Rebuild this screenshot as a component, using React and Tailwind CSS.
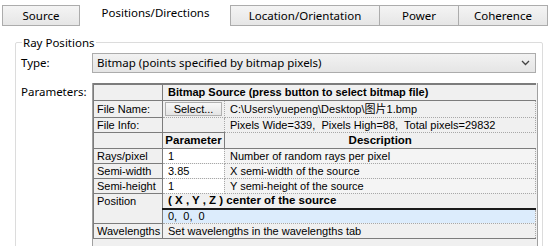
import React from 'react';

const tabs = [
  { label: 'Source', w: 'w-[78px]' },
  { label: 'Positions/Directions', w: 'w-[151px]', active: true },
  { label: 'Location/Orientation', w: 'w-[150px]' },
  { label: 'Power', w: 'w-[80px]' },
  { label: 'Coherence', w: 'w-[90px]' },
];

const rows = [
  { name: 'Rays/pixel', value: '1', desc: 'Number of random rays per pixel' },
  { name: 'Semi-width', value: '3.85', desc: 'X semi-width of the source' },
  { name: 'Semi-height', value: '1', desc: 'Y semi-height of the source' },
];

const label = 'bg-[#f0f0f0] border border-[#7c7c7c] px-[3px] text-left font-normal align-middle whitespace-nowrap overflow-hidden';
const cell = 'border-b border-r border-dotted border-[#a8a8a8] px-[5px] align-middle whitespace-nowrap overflow-hidden';

export default function App() {
  return (
    <div className="w-[551px] h-[246px] overflow-hidden bg-white text-black font-['Noto_Sans',sans-serif] text-[11.5px] leading-none">
      {/* tab strip */}
      <div className="flex items-end h-[26px] pl-[2px] pt-[4px]">
        {tabs.map((t) =>
          t.active ? (
            <div key={t.label} className={`${t.w} h-[22px] flex items-start justify-center pt-[3px]`}>
              {t.label}
            </div>
          ) : (
            <div
              key={t.label}
              className={`${t.w} h-[21px] flex items-center justify-center border border-[#acacac] -ml-px first:ml-0 bg-gradient-to-b from-[#f4f4f4] to-[#e6e6e6]`}
            >
              {t.label}
            </div>
          )
        )}
      </div>

      <fieldset className="ml-[15px] mt-[11px] w-[526px] h-[240px] border border-[#dcdcdc] rounded-[2px] pl-[4px] pr-[4px]">
        <legend className="px-[1px] ml-[2px]">Ray Positions</legend>

        <div className="flex items-center mt-[4px]">
          <div className="w-[72px] pl-px">Type:</div>
          <div className="w-[444px] h-[20px] flex items-center justify-between border border-[#acacac] bg-gradient-to-b from-[#f2f2f2] to-[#e5e5e5] pl-[4px] pr-[5px]">
            <span>Bitmap (points specified by bitmap pixels)</span>
            <svg width="9" height="6" viewBox="0 0 9 6">
              <path d="M1 1 L4.5 4.5 L8 1" fill="none" stroke="#444" strokeWidth="1.3" />
            </svg>
          </div>
        </div>

        <div className="flex mt-[10px]">
          <div className="w-[72px] pl-px pt-[3px]">Parameters:</div>
          <div className="w-[446px] border-l border-r border-[#a0a0a0] pr-[3px] h-[170px] bg-[#f0f0f0]">
            <table className="w-[442px] table-fixed border-collapse font-['Liberation_Sans',Arial,'Noto_Sans_CJK_SC',sans-serif] text-[11px] leading-none">
              <colgroup>
                <col className="w-[69px]" />
                <col className="w-[62px]" />
                <col className="w-[311px]" />
              </colgroup>
              <tbody>
                <tr className="h-[17px]">
                  <td className={`${label} border-t-2`}></td>
                  <td colSpan={2} className="bg-[#f0f0f0] border-t-2 border-[#7c7c7c] border-b px-[5px] font-bold whitespace-nowrap">
                    Bitmap Source (press button to select bitmap file)
                  </td>
                </tr>
                <tr className="h-[17px]">
                  <td className={label}>File Name:</td>
                  <td className="border-b border-r border-dotted border-[#a8a8a8] px-[2px] bg-[#f0f0f0]">
                    <div className="h-[14px] flex items-center justify-center border border-[#b0b0b0] bg-gradient-to-b from-[#f8f8f8] to-[#e4e4e4]">
                      Select...
                    </div>
                  </td>
                  <td className={`${cell} bg-[#f0f0f0]`}>C:\Users\yuepeng\Desktop\图片1.bmp</td>
                </tr>
                <tr className="h-[15px]">
                  <td className={label}>File Info:</td>
                  <td className={`${cell} bg-[#f0f0f0]`}></td>
                  <td className={`${cell} bg-[#f0f0f0]`}>Pixels Wide=339,&nbsp; Pixels High=88,&nbsp; Total pixels=29832</td>
                </tr>
                <tr className="h-[16px]">
                  <td className={label}></td>
                  <td className="bg-[#f0f0f0] border border-[#7c7c7c] text-center font-bold text-[11.5px]">Parameter</td>
                  <td className="bg-[#f0f0f0] border-b border-[#7c7c7c] text-center font-bold text-[11.5px]">Description</td>
                </tr>
                {rows.map((r) => (
                  <tr key={r.name} className="h-[15px]">
                    <td className={label}>{r.name}</td>
                    <td className={`${cell} bg-white`}>{r.value}</td>
                    <td className={`${cell} bg-[#f4f4f4]`}>{r.desc}</td>
                  </tr>
                ))}
                <tr className="h-[15px]">
                  <td rowSpan={2} className={`${label} align-top pt-[2px]`}>Position</td>
                  <td colSpan={2} className="bg-[#f0f0f0] border-b-2 border-[#1a1a1a] px-[5px] font-bold text-[11.5px] whitespace-nowrap">
                    ( X , Y , Z ) center of the source
                  </td>
                </tr>
                <tr className="h-[15px]">
                  <td colSpan={2} className={`${cell} bg-[#dcecfc]`}>0,&nbsp; 0,&nbsp; 0</td>
                </tr>
                <tr className="h-[15px]">
                  <td className={label}>Wavelengths</td>
                  <td colSpan={2} className={`${cell} bg-[#f0f0f0]`}>Set wavelengths in the wavelengths tab</td>
                </tr>
                <tr className="h-[15px]">
                  <td colSpan={3} className="bg-[#f0f0f0] border-t border-[#7c7c7c]"></td>
                </tr>
              </tbody>
            </table>
          </div>
        </div>
      </fieldset>
    </div>
  );
}
